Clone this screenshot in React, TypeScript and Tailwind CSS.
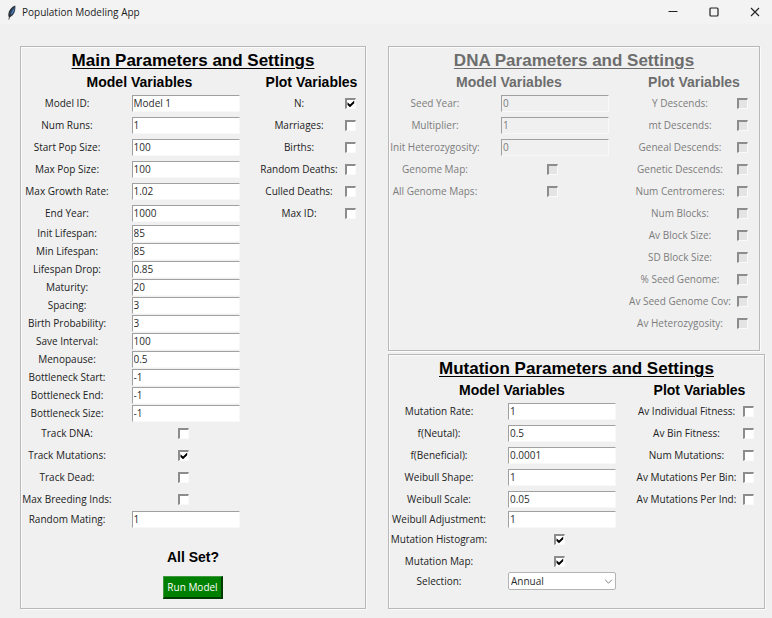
import { useId } from "react";
import type { ReactNode } from "react";

type Field = {
  label: string;
  kind: "text" | "check" | "select";
  value?: string;
  checked?: boolean;
  compact?: boolean;
};

const text = (label: string, value: string, compact = false): Field => ({ label, kind: "text", value, compact });
const check = (label: string, checked = false): Field => ({ label, kind: "check", checked });

const mainFields: Field[] = [
  text("Model ID:", "Model 1"),
  text("Num Runs:", "1"),
  text("Start Pop Size:", "100"),
  text("Max Pop Size:", "100"),
  text("Max Growth Rate:", "1.02"),
  text("End Year:", "1000"),
  text("Init Lifespan:", "85", true),
  text("Min Lifespan:", "85", true),
  text("Lifespan Drop:", "0.85", true),
  text("Maturity:", "20", true),
  text("Spacing:", "3", true),
  text("Birth Probability:", "3", true),
  text("Save Interval:", "100", true),
  text("Menopause:", "0.5", true),
  text("Bottleneck Start:", "-1", true),
  text("Bottleneck End:", "-1", true),
  text("Bottleneck Size:", "-1", true),
  check("Track DNA:"),
  check("Track Mutations:", true),
  check("Track Dead:"),
  check("Max Breeding Inds:"),
  text("Random Mating:", "1", true),
];

const mainPlots: Field[] = [
  check("N:", true),
  check("Marriages:"),
  check("Births:"),
  check("Random Deaths:"),
  check("Culled Deaths:"),
  check("Max ID:"),
];

const dnaFields: Field[] = [
  text("Seed Year:", "0"),
  text("Multiplier:", "1"),
  text("Init Heterozygosity:", "0"),
  check("Genome Map:"),
  check("All Genome Maps:"),
];

const dnaPlots: Field[] = [
  "Y Descends:",
  "mt Descends:",
  "Geneal Descends:",
  "Genetic Descends:",
  "Num Centromeres:",
  "Num Blocks:",
  "Av Block Size:",
  "SD Block Size:",
  "% Seed Genome:",
  "Av Seed Genome Cov:",
  "Av Heterozygosity:",
].map((label) => check(label));

const mutationFields: Field[] = [
  text("Mutation Rate:", "1"),
  text("f(Neutal):", "0.5"),
  text("f(Beneficial):", "0.0001"),
  text("Weibull Shape:", "1"),
  text("Weibull Scale:", "0.05"),
  text("Weibull Adjustment:", "1", true),
  check("Mutation Histogram:", true),
  check("Mutation Map:", true),
  { label: "Selection:", kind: "select", value: "Annual", compact: true },
];

const mutationPlots: Field[] = [
  "Av Individual Fitness:",
  "Av Bin Fitness:",
  "Num Mutations:",
  "Av Mutations Per Bin:",
  "Av Mutations Per Ind:",
].map((label) => check(label));

function CheckBox({ id, checked }: { id: string; checked?: boolean }) {
  return (
    <span className="relative mr-[5px] block size-[11px]">
      <input
        id={id}
        type="checkbox"
        defaultChecked={checked}
        className="peer block size-[11px] appearance-none border-t-2 border-r border-b border-l-2 border-t-[#8c8c8c] border-r-[#fafafa] border-b-[#fafafa] border-l-[#8c8c8c] bg-white disabled:bg-[#e4e4e4]"
      />
      <svg
        viewBox="0 0 11 11"
        className="pointer-events-none absolute inset-0 hidden size-[11px] peer-checked:block"
        aria-hidden="true"
      >
        <path d="M2.5 4.2 L5 6.4 L9.2 2.4 V5.2 L5 9.2 L2.5 7 Z" fill="#000" />
      </svg>
    </span>
  );
}

function Control({ id, field }: { id: string; field: Field }) {
  if (field.kind === "check") return <CheckBox id={id} checked={field.checked} />;
  if (field.kind === "select") {
    return (
      <span className="relative block">
        <select
          id={id}
          defaultValue={field.value}
          className="block h-[18px] w-[108px] appearance-none rounded-xs border border-[#b4b4b4] bg-white pl-[2px] leading-4 text-[#2b2b2b]"
        >
          <option>Annual</option>
          <option>Lifetime</option>
        </select>
        <svg
          viewBox="0 0 10 6"
          className="pointer-events-none absolute top-[7px] right-[3px] h-[5px] w-[9px]"
          fill="none"
          stroke="#777"
          strokeWidth="1.1"
          aria-hidden="true"
        >
          <path d="M1 1 L5 5 L9 1" />
        </svg>
      </span>
    );
  }
  return (
    <input
      id={id}
      type="text"
      defaultValue={field.value}
      className="block h-[17px] w-[108px] border-t border-r border-b border-l border-t-[#a0a0a0] border-r-[#f8f8f8] border-b-[#f8f8f8] border-l-[#a0a0a0] bg-white pl-px leading-[15px] text-[#2b2b2b] disabled:bg-[#f0f0f0] disabled:text-[#7c7c7c]"
    />
  );
}

function Row({ field, labelWidth, controlWidth }: { field: Field; labelWidth: string; controlWidth: string }) {
  const id = useId();
  return (
    <div className={`flex items-center ${field.compact ? "h-[18px]" : "h-[22px]"}`}>
      <label htmlFor={id} className={`shrink-0 text-center whitespace-nowrap ${labelWidth}`}>
        {field.label}
      </label>
      <div className={`flex justify-center ${controlWidth}`}>
        <Control id={id} field={field} />
      </div>
    </div>
  );
}

type PanelProps = {
  title: string;
  fields: Field[];
  plots: Field[];
  labelWidth: string;
  plotLabelWidth: string;
  plotCheckWidth: string;
  disabled?: boolean;
  className?: string;
  children?: ReactNode;
};

const heading = "font-['Liberation_Sans',Arial,sans-serif] font-bold text-center";

function Panel(props: PanelProps) {
  const { title, fields, plots, labelWidth, plotLabelWidth, plotCheckWidth, disabled, className, children } = props;
  const headingColor = disabled ? "text-[#6d6d6d]" : "text-black";
  return (
    <fieldset
      disabled={disabled}
      className={`min-w-0 border border-[#b8b8b8] shadow-[inset_1px_1px_0_#fbfbfb,1px_1px_0_#fbfbfb] ${disabled ? "text-[#7c7c7c]" : "text-[#222]"} ${className ?? ""}`}
    >
      <h2 className={`${heading} ${headingColor} pt-px text-[17px] leading-[26px] underline decoration-1 underline-offset-2`}>{title}</h2>
      <div className="flex">
        <section className="flex-1">
          <h3 className={`${heading} ${headingColor} mb-px text-[14px] leading-[17px]`}>Model Variables</h3>
          {fields.map((f) => (
            <Row key={f.label} field={f} labelWidth={labelWidth} controlWidth="flex-1" />
          ))}
        </section>
        <section>
          <h3 className={`${heading} ${headingColor} mb-px text-[14px] leading-[17px]`}>Plot Variables</h3>
          {plots.map((f) => (
            <Row key={f.label} field={f} labelWidth={plotLabelWidth} controlWidth={plotCheckWidth} />
          ))}
        </section>
      </div>
      {children}
    </fieldset>
  );
}

function TitleBar() {
  return (
    <header className="flex h-6 items-center bg-[#f3f3f3] pr-3 pl-[7px]">
      <svg viewBox="0 0 10 16" className="h-[15px] w-[10px]" aria-hidden="true">
        <path d="M8.5 0.5 C5 1.5 2 5 1.2 9 C0.8 11 1.2 12.6 2 13.2 C5.5 12 8 8.5 8.4 5 C8.6 3.4 8.8 2 8.5 0.5 Z" fill="#2c3440" />
        <path d="M7.8 2.2 C5.2 4 3.2 7.4 2.8 11 C5.2 9.8 7.4 6.6 7.6 4.4 Z" fill="#4a86c8" />
        <path d="M7.4 2.8 C4.6 6 2.6 10 1.6 15.6" stroke="#222" strokeWidth="0.8" fill="none" />
      </svg>
      <h1 className="ml-[5px] flex-1 leading-4 text-[#1c1c1c]">Population Modeling App</h1>
      <div className="flex items-center gap-[31px] text-[#222]">
        <button type="button" aria-label="Minimize">
          <svg viewBox="0 0 10 10" className="size-[10px]" stroke="currentColor" aria-hidden="true">
            <path d="M0.5 4.5 H9.5" />
          </svg>
        </button>
        <button type="button" aria-label="Maximize">
          <svg viewBox="0 0 10 10" className="size-[10px]" stroke="currentColor" strokeWidth="1.2" fill="none" aria-hidden="true">
            <rect x="1" y="1" width="8" height="8" rx="1" />
          </svg>
        </button>
        <button type="button" aria-label="Close">
          <svg viewBox="0 0 10 10" className="size-[10px]" stroke="currentColor" strokeWidth="1.1" aria-hidden="true">
            <path d="M1 1 L9 9 M9 1 L1 9" />
          </svg>
        </button>
      </div>
    </header>
  );
}

export default function App() {
  return (
    <div className="min-h-screen bg-[#f0f0f0] font-['Open_Sans','Noto_Sans',sans-serif] text-[10px] leading-4">
      <TitleBar />
      <main className="grid grid-cols-[346fr_377fr] gap-[22px] pt-[22px] pr-[7px] pb-2 pl-5">
        <Panel
          title="Main Parameters and Settings"
          fields={mainFields}
          plots={mainPlots}
          labelWidth="w-[92px]"
          plotLabelWidth="w-[82px]"
          plotCheckWidth="w-[25px]"
        >
          <div className="flex flex-col items-center pt-5 pb-[9px]">
            <p className={`${heading} text-[14px] leading-[18px] text-black`}>All Set?</p>
            <button
              type="button"
              className="mt-[10px] h-[23px] w-[60px] border-t border-r-2 border-b-2 border-l border-t-[#3f9a3f] border-r-[#003c00] border-b-[#003c00] border-l-[#3f9a3f] bg-[#008000] whitespace-nowrap text-white"
            >
              Run Model
            </button>
          </div>
        </Panel>
        <div className="flex min-w-0 flex-col gap-[3px]">
          <Panel
            title="DNA Parameters and Settings"
            fields={dnaFields}
            plots={dnaPlots}
            labelWidth="w-[92px]"
            plotLabelWidth="w-[102px]"
            plotCheckWidth="w-[28px]"
            disabled
            className="mr-[5px] pb-4"
          />
          <Panel
            title="Mutation Parameters and Settings"
            fields={mutationFields}
            plots={mutationPlots}
            labelWidth="w-[100px]"
            plotLabelWidth="w-[103px]"
            plotCheckWidth="w-[26px]"
            className="flex-1 pb-[18px]"
          />
        </div>
      </main>
    </div>
  );
}
